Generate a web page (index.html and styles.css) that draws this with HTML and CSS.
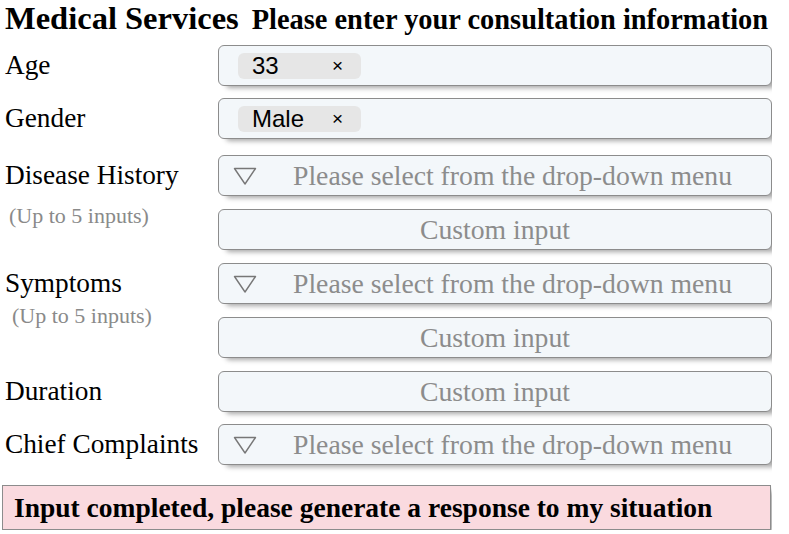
FILE: index.html
```html
<!DOCTYPE html>
<html lang="en">
<head>
  <meta charset="UTF-8">
  <meta name="viewport" content="width=device-width, initial-scale=1.0">
  <title>Medical Services</title>
  <link rel="stylesheet" href="styles.css">
</head>
<body>
  <header class="title-bar">
    <h1>Medical Services</h1>
    <h2>Please enter your consultation information</h2>
  </header>

  <main class="form">
    <div class="field">
      <div class="label">Age</div>
      <div class="inputs">
        <div class="box"><span class="tag">33 <span class="tag-x">×</span></span></div>
      </div>
    </div>

    <div class="field field-tight">
      <div class="label">Gender</div>
      <div class="inputs">
        <div class="box"><span class="tag">Male <span class="tag-x">×</span></span></div>
      </div>
    </div>

    <div class="field field-wide">
      <div class="label">
        Disease History
        <span class="note">(Up to 5 inputs)</span>
      </div>
      <div class="inputs">
        <div class="box select">
          <svg class="arrow" width="24" height="18" viewBox="0 0 24 18"><path d="M1.5 1.5 H22.5 L12 17 Z" fill="none" stroke="#777" stroke-width="1.4" stroke-linejoin="round"/></svg>
          <span class="placeholder">Please select from the drop-down menu</span>
        </div>
        <div class="box custom"><span class="placeholder">Custom input</span></div>
      </div>
    </div>

    <div class="field">
      <div class="label">
        Symptoms
        <span class="note note-in">(Up to 5 inputs)</span>
      </div>
      <div class="inputs">
        <div class="box select">
          <svg class="arrow" width="24" height="18" viewBox="0 0 24 18"><path d="M1.5 1.5 H22.5 L12 17 Z" fill="none" stroke="#777" stroke-width="1.4" stroke-linejoin="round"/></svg>
          <span class="placeholder">Please select from the drop-down menu</span>
        </div>
        <div class="box custom"><span class="placeholder">Custom input</span></div>
      </div>
    </div>

    <div class="field">
      <div class="label">Duration</div>
      <div class="inputs">
        <div class="box custom"><span class="placeholder">Custom input</span></div>
      </div>
    </div>

    <div class="field field-tight">
      <div class="label">Chief Complaints</div>
      <div class="inputs">
        <div class="box select">
          <svg class="arrow" width="24" height="18" viewBox="0 0 24 18"><path d="M1.5 1.5 H22.5 L12 17 Z" fill="none" stroke="#777" stroke-width="1.4" stroke-linejoin="round"/></svg>
          <span class="placeholder">Please select from the drop-down menu</span>
        </div>
      </div>
    </div>
  </main>

  <button class="submit">Input completed, please generate a response to my situation</button>
</body>
</html>
```

FILE: styles.css
```css
/* Page */
body {
  margin: 0;
  padding: 0 0 0 2px;
  font-family: "Liberation Serif", "Times New Roman", serif;
  color: #000;
  background: #fff;
  width: 770px;
}

.title-bar {
  display: flex;
  align-items: baseline;
  gap: 13px;
  padding: 0 0 0 3px;
  height: 42px;
}

.title-bar h1 {
  margin: 0;
  font-size: 32.5px;
  line-height: 36px;
  font-weight: bold;
  white-space: nowrap;
}

.title-bar h2 {
  margin: 0;
  font-size: 28.4px;
  line-height: 36px;
  font-weight: bold;
  white-space: nowrap;
}

/* Form rows */
.form {
  display: flex;
  flex-direction: column;
  gap: 13px;
  margin-top: 3px;
}

.field {
  display: flex;
}

.field-tight {
  margin-top: -1px;
}

.field-wide {
  margin-top: 3px;
}

.label {
  width: 216px;
  box-sizing: border-box;
  padding-left: 3px;
  font-size: 27.3px;
  line-height: 41px;
  flex-shrink: 0;
  white-space: nowrap;
}

.note {
  display: block;
  font-size: 22px;
  line-height: 22px;
  color: #8a8a8a;
  padding-left: 4px;
  margin-top: 9px;
}

.note-in {
  padding-left: 7px;
  margin-top: 1px;
}

.inputs {
  flex: 1;
  display: flex;
  flex-direction: column;
  gap: 13px;
}

.box {
  height: 41px;
  box-sizing: border-box;
  border: 1.5px solid #8c8c8c;
  border-radius: 6px;
  background: #f3f7fa;
  box-shadow: 6px 4px 5px -2px rgba(0, 0, 0, 0.35);
  display: flex;
  align-items: center;
  padding: 0 19px;
}

.tag {
  font-family: "Liberation Sans", Arial, sans-serif;
  font-size: 24px;
  background: #e6e6e6;
  border-radius: 6px;
  height: 26px;
  width: 123px;
  box-sizing: border-box;
  display: flex;
  align-items: center;
  padding-left: 14px;
}

.tag-x {
  font-size: 19px;
  margin-left: auto;
  margin-right: 18px;
}

.placeholder {
  color: #8c8c8c;
  font-size: 27.7px;
  white-space: nowrap;
}

.select .arrow {
  margin-left: -5px;
  margin-right: 36px;
  flex-shrink: 0;
}

.custom {
  justify-content: center;
}

/* Submit button */
.submit {
  display: block;
  margin-top: 20px;
  width: 769px;
  height: 45px;
  text-align: left;
  padding: 0 0 0 11px;
  font-family: "Liberation Serif", "Times New Roman", serif;
  font-size: 27.5px;
  font-weight: bold;
  color: #000;
  background: #fadadf;
  border: 1px solid #8c8c8c;
  box-shadow: 6px 4px 5px -2px rgba(0, 0, 0, 0.3);
  white-space: nowrap;
}
```
